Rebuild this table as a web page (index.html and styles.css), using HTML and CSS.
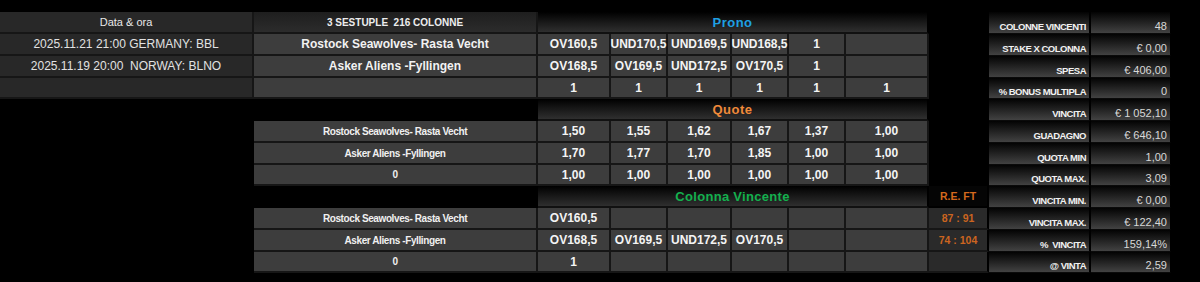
FILE: index.html
```html
<!DOCTYPE html>
<html lang="it">
<head>
<meta charset="utf-8">
<title>Sestuple</title>
<link rel="stylesheet" href="styles.css">
</head>
<body>
<div class="sheet">
  <!-- row 1 -->
  <div class="c dk sm">Data &amp; ora</div>
  <div class="c dk caps">3 SESTUPLE  216 COLONNE</div>
  <div class="c hdr prono">Prono</div>
  <div class="c blk"></div>
  <div class="c lbl">COLONNE VINCENTI</div>
  <div class="c val">48</div>
  <!-- row 2 -->
  <div class="c dk date">2025.11.21 21:00 GERMANY: BBL</div>
  <div class="c gr name">Rostock Seawolves- Rasta Vecht</div>
  <div class="c gr b">OV160,5</div>
  <div class="c gr b">UND170,5</div>
  <div class="c gr b">UND169,5</div>
  <div class="c gr b">UND168,5</div>
  <div class="c gr b">1</div>
  <div class="c gr b"></div>
  <div class="c blk"></div>
  <div class="c lbl">STAKE X COLONNA</div>
  <div class="c val">€ 0,00</div>
  <!-- row 3 -->
  <div class="c dk date">2025.11.19 20:00  NORWAY: BLNO</div>
  <div class="c gr name">Asker Aliens -Fyllingen</div>
  <div class="c gr b">OV168,5</div>
  <div class="c gr b">OV169,5</div>
  <div class="c gr b">UND172,5</div>
  <div class="c gr b">OV170,5</div>
  <div class="c gr b">1</div>
  <div class="c gr b"></div>
  <div class="c blk"></div>
  <div class="c lbl">SPESA</div>
  <div class="c val">€ 406,00</div>
  <!-- row 4 -->
  <div class="c dk"></div>
  <div class="c gr"></div>
  <div class="c gr b">1</div>
  <div class="c gr b">1</div>
  <div class="c gr b">1</div>
  <div class="c gr b">1</div>
  <div class="c gr b">1</div>
  <div class="c gr b">1</div>
  <div class="c blk"></div>
  <div class="c lbl">% BONUS MULTIPLA</div>
  <div class="c val">0</div>
  <!-- row 5 -->
  <div class="c blk"></div>
  <div class="c blk"></div>
  <div class="c hdr quote">Quote</div>
  <div class="c blk"></div>
  <div class="c lbl">VINCITA</div>
  <div class="c val">€ 1 052,10</div>
  <!-- row 6 -->
  <div class="c blk"></div>
  <div class="c gr small">Rostock Seawolves- Rasta Vecht</div>
  <div class="c gr b">1,50</div>
  <div class="c gr b">1,55</div>
  <div class="c gr b">1,62</div>
  <div class="c gr b">1,67</div>
  <div class="c gr b">1,37</div>
  <div class="c gr b">1,00</div>
  <div class="c blk"></div>
  <div class="c lbl">GUADAGNO</div>
  <div class="c val">€ 646,10</div>
  <!-- row 7 -->
  <div class="c blk"></div>
  <div class="c gr small">Asker Aliens -Fyllingen</div>
  <div class="c gr b">1,70</div>
  <div class="c gr b">1,77</div>
  <div class="c gr b">1,70</div>
  <div class="c gr b">1,85</div>
  <div class="c gr b">1,00</div>
  <div class="c gr b">1,00</div>
  <div class="c blk"></div>
  <div class="c lbl">QUOTA MIN</div>
  <div class="c val">1,00</div>
  <!-- row 8 -->
  <div class="c blk"></div>
  <div class="c gr small">0</div>
  <div class="c gr b">1,00</div>
  <div class="c gr b">1,00</div>
  <div class="c gr b">1,00</div>
  <div class="c gr b">1,00</div>
  <div class="c gr b">1,00</div>
  <div class="c gr b">1,00</div>
  <div class="c blk"></div>
  <div class="c lbl">QUOTA MAX.</div>
  <div class="c val">3,09</div>
  <!-- row 9 -->
  <div class="c blk"></div>
  <div class="c blk"></div>
  <div class="c hdr vinc">Colonna Vincente</div>
  <div class="c blk re">R.E. FT</div>
  <div class="c lbl">VINCITA MIN.</div>
  <div class="c val">€ 0,00</div>
  <!-- row 10 -->
  <div class="c blk"></div>
  <div class="c gr small">Rostock Seawolves- Rasta Vecht</div>
  <div class="c gr b">OV160,5</div>
  <div class="c gr b"></div>
  <div class="c gr b"></div>
  <div class="c gr b"></div>
  <div class="c gr b"></div>
  <div class="c gr b"></div>
  <div class="c score">87 : 91</div>
  <div class="c lbl">VINCITA MAX.</div>
  <div class="c val">€ 122,40</div>
  <!-- row 11 -->
  <div class="c blk"></div>
  <div class="c gr small">Asker Aliens -Fyllingen</div>
  <div class="c gr b">OV168,5</div>
  <div class="c gr b">OV169,5</div>
  <div class="c gr b">UND172,5</div>
  <div class="c gr b">OV170,5</div>
  <div class="c gr b"></div>
  <div class="c gr b"></div>
  <div class="c score">74 : 104</div>
  <div class="c lbl">%  VINCITA</div>
  <div class="c val">159,14%</div>
  <!-- row 12 -->
  <div class="c blk"></div>
  <div class="c gr small">0</div>
  <div class="c gr b">1</div>
  <div class="c gr b"></div>
  <div class="c gr b"></div>
  <div class="c gr b"></div>
  <div class="c gr b"></div>
  <div class="c gr b"></div>
  <div class="c score"></div>
  <div class="c lbl">@ VINTA</div>
  <div class="c val">2,59</div>
</div>
</body>
</html>
```

FILE: styles.css
```css
html, body {
  margin: 0;
  padding: 0;
  background: #000;
}
body {
  padding-top: 12px;
  font-family: "Liberation Sans", Arial, sans-serif;
  color: #f0f0f0;
}
.sheet {
  display: grid;
  grid-template-columns: 254px 284px 73px 57px 64px 57px 57px 83px 60px 102px 80px;
  grid-template-rows: 22px 22px 22px 21px 22px 22px 22px 21px 22px 22px 22px 21px;
  width: 1171px;
}
.c {
  box-sizing: border-box;
  display: flex;
  align-items: center;
  justify-content: center;
  white-space: pre;
  overflow: visible;
  border-right: 2px solid #161616;
  border-bottom: 2px solid #161616;
  min-width: 0;
}
.blk {
  background: #000;
  border-color: #000;
}
.dk {
  background: #282828;
}
.gr {
  background: #3d3d3d;
}
.sm {
  font-size: 11px;
  color: #e8e8e8;
}
.date {
  font-size: 12px;
  color: #e2e2e2;
}
.caps {
  font-size: 10px;
  font-weight: bold;
  color: #ededed;
  background: linear-gradient(#1e1e1e, #2c2c2c);
}
.name {
  font-size: 12px;
  font-weight: bold;
  color: #f2f2f2;
}
.small {
  font-size: 10px;
  letter-spacing: -0.4px;
  font-weight: bold;
  color: #f0f0f0;
}
.b {
  font-size: 12px;
  font-weight: bold;
  color: #f4f4f4;
}
.hdr {
  grid-column: span 6;
  background: linear-gradient(#000 0%, #161616 45%, #2f2f2f 100%);
  font-size: 13px;
  font-weight: bold;
  letter-spacing: 0.5px;
  border-right-color: #000;
  border-bottom-color: #111;
  padding-top: 1px;
}
.prono { color: #1fa0e2; }
.quote { color: #f08a3a; }
.vinc { color: #14b04e; letter-spacing: 0.3px; }
.re {
  color: #d4691d;
  font-size: 10.5px;
  font-weight: bold;
  background: #050505;
}
.score {
  background: #2a2a2a;
  color: #cc6520;
  font-size: 10.5px;
  font-weight: bold;
  border-right-color: #000;
}
.lbl, .val {
  justify-content: flex-end;
  align-items: flex-end;
  padding-right: 3px;
  padding-bottom: 1px;
  background: linear-gradient(#030303 0%, #1c1c1c 40%, #424242 100%);
  border-right: 2px solid #000;
  border-bottom: 1px solid #0a0a0a;
}
.lbl {
  font-size: 9.5px;
  letter-spacing: -0.5px;
  font-weight: bold;
  color: #f2f2f2;
}
.val {
  font-size: 11px;
  color: #d8d8d8;
  border-right: 1px solid #000;
}
```
